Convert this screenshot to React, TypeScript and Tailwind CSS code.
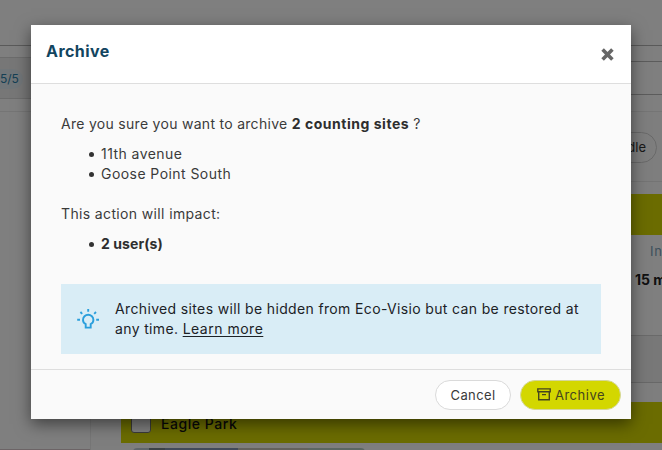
import React from 'react';

const LightBulb = () => (
  <svg width="24" height="24" viewBox="0 0 24 24" fill="none" stroke="#2b9fdc" strokeWidth="1.9" className="-mt-px shrink-0">
    <path d="M9.7 20.6v-3.5C8 16.2 7 14.7 7 12.9a5.2 5.2 0 0 1 10.4 0c0 1.8-1 3.3-2.7 4.2v3.5z" />
    <path d="M12.2 2v2.8M1.2 12.8h2.8M20.2 12.8h2.8M4.4 5l1.8 1.8M20 5l-1.8 1.8" />
  </svg>
);

const ArchiveBox = () => (
  <svg width="14" height="13" viewBox="0 0 14 13" fill="none" stroke="#45451f" strokeWidth="1.4" className="shrink-0">
    <path d="M.8.9h12.4v2.8H.8zM1.7 3.7v8.1h10.6V3.7M5 6.6h4" />
  </svg>
);

const Cross = () => (
  <svg width="13" height="13" viewBox="0 0 13 13" stroke="#666" strokeWidth="3.6">
    <path d="M1.6 1.6l9.8 9.8M11.4 1.6l-9.8 9.8" />
  </svg>
);

const Item = ({ children }: { children: React.ReactNode }) => (
  <li className="flex items-center gap-[7px]">
    <span className="mt-px size-[5px] rounded-full bg-[#333]" />
    {children}
  </li>
);

function Backdrop() {
  return (
    <div className="flex h-full flex-col bg-white">
      <header className="h-[46px] shrink-0 border-b border-[#b5b5b5]" />
      <div className="flex h-[66px] shrink-0 border-b border-[#eaeaea]">
        <div className="mt-[11px] flex h-[42px] w-[90px] items-center border-y border-[#d8d8d8] bg-[#eeeeee]">
          <span className="mt-[2px] rounded-r-full bg-[#e3edf2] py-[2px] pr-1 text-[12px] leading-4 text-[#2a7ea8]">5/5</span>
        </div>
        <div className="mt-[15px] h-[34px] flex-1 border-y border-[#b8b8b8]" />
      </div>
      <div className="flex min-h-0 flex-1">
        <aside className="flex w-[91px] shrink-0 flex-col justify-end border-r border-[#ececec]">
          <div className="h-px bg-[#d8c8cc]" />
        </aside>
        <main className="flex flex-1 flex-col overflow-hidden bg-[#fcfcfc] pl-[30px]">
          <div className="flex h-[70px] shrink-0 items-center justify-end border-b border-[#e8e8e8] pr-[5px]">
            <span className="mt-[2px] flex h-[31px] w-[90px] items-center justify-end rounded-full border border-[#d3d3d3] pr-[10px] text-[13px] text-[#333]">Bundle</span>
          </div>
          <section className="mt-3 h-[189px] shrink-0 border-b border-[#d0d0d0] bg-white">
            <div className="h-[41px] bg-[#d6d900]" />
            <div className="h-[101px] border-b border-[#d5d5d5] pt-[6px] pl-[514px] whitespace-nowrap">
              <p className="pl-[15px] text-[13px] leading-5 tracking-[.8px] text-[#7aa0b8]">Interval</p>
              <p className="mt-[9px] text-[14px] leading-5 font-bold text-[#222]">15 min</p>
            </div>
            <div className="h-[46px] bg-[#f0f0f0]" />
          </section>
          <section className="mt-[19px] shrink-0">
            <div className="flex h-[41px] items-center gap-[10px] bg-[#d6d900] pl-[10px]">
              <span className="size-5 rounded-[3px] border border-[#777] bg-white" />
              <span className="mt-px text-[14px] font-medium tracking-[.55px] text-[#111]">Eagle Park</span>
            </div>
            <div className="ml-3 mt-[5px] flex h-10 w-[232px] overflow-hidden rounded-t">
              <div className="w-4 bg-[#c0ccd5]" />
              <div className="w-4 bg-[#78858c]" />
              <div className="w-[74px] bg-[#8495b2]" />
              <div className="w-[70px] bg-[#c9c4bb]" />
              <div className="w-[58px] bg-[#b8cfc4]" />
            </div>
          </section>
        </main>
      </div>
    </div>
  );
}

export default function App() {
  return (
    <div className="relative h-[450px] w-[662px] overflow-hidden font-['Inter',sans-serif]">
      <Backdrop />
      <div className="absolute inset-0 bg-black/50 pt-[25px] pl-[31px]">
        <div role="dialog" className="flex h-[394px] w-[600px] flex-col bg-[#fafafa] text-[14px] leading-5 text-[#3a3a3a] shadow-[0_5px_15px_rgba(0,0,0,.5)]">
          <header className="flex h-[59px] shrink-0 items-center justify-between border-b border-[#dedede] bg-white pr-[17px] pl-[15px]">
            <h1 className="-mt-[6px] text-[16px] leading-6 font-bold tracking-[.45px] text-[#12455f]">Archive</h1>
            <button aria-label="Close"><Cross /></button>
          </header>
          <div className="flex flex-1 flex-col px-[30px] pt-[30px]">
            <p className="whitespace-nowrap">
              <span className="tracking-[.29px]">Are you sure you want to archive </span>
              <b className="tracking-[.53px] text-[#2e2e2e]">2 counting sites</b> ?
            </p>
            <ul className="mt-[10px] pl-7 tracking-[.44px]">
              <Item>11th avenue</Item>
              <Item>Goose Point South</Item>
            </ul>
            <p className="mt-5 tracking-[.36px]">This action will impact:</p>
            <ul className="mt-[10px] pl-7">
              <Item><b className="tracking-[.07px] text-[#2e2e2e]">2 user(s)</b></Item>
            </ul>
            <div className="mt-[30px] flex h-[70px] items-center bg-[#d9edf6] pl-[15px] text-[#1c2226]">
              <LightBulb />
              <p className="ml-[15px] whitespace-nowrap tracking-[.355px]">
                Archived sites will be hidden from Eco-Visio but can be restored at<br />
                any time. <a className="tracking-[.5px] underline underline-offset-2">Learn more</a>
              </p>
            </div>
          </div>
          <footer className="flex h-[50px] shrink-0 items-center justify-end gap-[9px] border-t border-[#dedede] pr-[10px] text-[13px]">
            <button className="h-[30px] w-[76px] rounded-full border border-[#dadada] bg-white tracking-[.4px]">Cancel</button>
            <button className="flex h-[30px] w-[101px] items-center justify-center gap-1 rounded-full border border-[#d5d79a] bg-[#d3d700] pl-px tracking-[.5px] text-[#45451f]">
              <ArchiveBox />Archive
            </button>
          </footer>
        </div>
      </div>
    </div>
  );
}
